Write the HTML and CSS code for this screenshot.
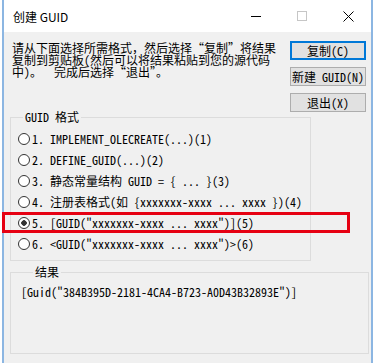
FILE: index.html
```html
<!DOCTYPE html>
<html lang="zh-CN">
<head>
    <meta charset="UTF-8">
    <meta name="viewport" content="width=device-width, initial-scale=1.0">
    <title>创建 GUID</title>
    <link rel="stylesheet" href="styles.css">
</head>
<body>
    <div class="window">
        <div class="titlebar">
            <span class="title">创建 GUID</span>
            <span class="caption">
                <svg width="10" height="10" viewBox="0 0 10 10"><path d="M0 5.5h10" stroke="#000" stroke-width="1"/></svg>
            </span>
            <span class="caption">
                <svg width="10" height="10" viewBox="0 0 10 10"><rect x="0.5" y="0.5" width="9" height="9" fill="none" stroke="#c6c6c6"/></svg>
            </span>
            <span class="caption">
                <svg width="11" height="11" viewBox="0 0 11 11"><path d="M0.5 0.5l10 10M10.5 0.5l-10 10" stroke="#000" stroke-width="1"/></svg>
            </span>
        </div>

        <div class="client">
            <div class="top">
                <p class="intro">请从下面选择所需格式，然后选择“复制”将结果<br>复制到剪贴板(然后可以将结果粘贴到您的源代码<br>中)。&nbsp;&nbsp;完成后选择“退出”。</p>
                <div class="buttons">
                    <button class="btn default">复制(C)</button>
                    <button class="btn">新建 GUID(N)</button>
                    <button class="btn">退出(X)</button>
                </div>
            </div>

            <fieldset class="group formats">
                <legend>GUID 格式</legend>
                <label class="option"><span class="radio"></span>1. IMPLEMENT_OLECREATE(...)(1)</label>
                <label class="option"><span class="radio"></span>2. DEFINE_GUID(...)(2)</label>
                <label class="option"><span class="radio"></span>3. 静态常量结构 GUID = { ... }(3)</label>
                <label class="option"><span class="radio"></span>4. 注册表格式(如 {xxxxxxx-xxxx ... xxxx })(4)</label>
                <label class="option"><span class="radio checked"></span>5. [GUID("xxxxxxx-xxxx ... xxxx")](5)<span class="mark"></span></label>
                <label class="option"><span class="radio"></span>6. &lt;GUID("xxxxxxx-xxxx ... xxxx")&gt;(6)</label>
            </fieldset>

            <fieldset class="group result">
                <legend>结果</legend>
                <div class="result-text">[Guid("384B395D-2181-4CA4-B723-A0D43B32893E")]</div>
            </fieldset>
        </div>
    </div>
</body>
</html>
```

FILE: styles.css
```css
body {
    margin: 0;
    background: #fff;
    font-family: "Noto Sans Mono CJK SC", "Noto Sans CJK SC", monospace;
    font-size: 12px;
    color: #000;
}
.window {
    margin-left: 2px;
    width: 367px;
    border-left: 2px solid #8cb6e2;
    border-right: 2px solid #8cb6e2;
}
.titlebar {
    height: 32px;
    display: flex;
    align-items: center;
    background: #fff;
}
.title {
    flex: 1;
    padding-left: 9px;
    font-family: "Noto Sans CJK SC", sans-serif;
    font-size: 12px;
}
.caption {
    width: 46px;
    height: 32px;
    display: flex;
    align-items: center;
    justify-content: center;
}
.client {
    background: #f0f0f0;
    height: 331px;
    box-sizing: border-box;
    padding: 9px 2px 0 6px;
}
.top {
    display: flex;
    justify-content: space-between;
}
.intro {
    margin: 1px 0 0 2px;
    line-height: 12px;
    white-space: nowrap;
}
.buttons {
    display: flex;
    flex-direction: column;
    gap: 7px;
    width: 76px;
    margin-right: 3px;
}
.btn {
    height: 19px;
    padding: 0;
    border: 1px solid #adadad;
    background: #e1e1e1;
    font: inherit;
    line-height: 17px;
    color: #000;
}
.btn.default {
    border-color: #0078d7;
    box-shadow: inset 0 0 0 1px #0078d7;
}
.group {
    margin: 0;
    border: 1px solid #dcdcdc;
    box-sizing: border-box;
}
.group legend {
    margin-left: 12px;
    padding: 0 2px;
    line-height: 10px;
}
.formats {
    width: 301px;
    padding: 6px 0 6px;
}
.option {
    position: relative;
    display: flex;
    align-items: center;
    gap: 2px;
    height: 21px;
    padding-left: 7px;
    white-space: pre;
}
.radio {
    width: 12px;
    height: 12px;
    box-sizing: border-box;
    border: 1px solid #333;
    border-radius: 50%;
    background: #fff;
}
.radio.checked {
    background: radial-gradient(circle, #333 0 2.5px, #fff 3px);
}
.mark {
    position: absolute;
    left: -9px;
    top: 0;
    width: 348px;
    height: 21px;
    box-sizing: border-box;
    border: 3px solid #e60012;
}
.result {
    width: 359px;
    height: 87px;
    margin-top: 6px;
    padding: 9px 0 0 10px;
}
.result-text {
    line-height: 12px;
}
```
